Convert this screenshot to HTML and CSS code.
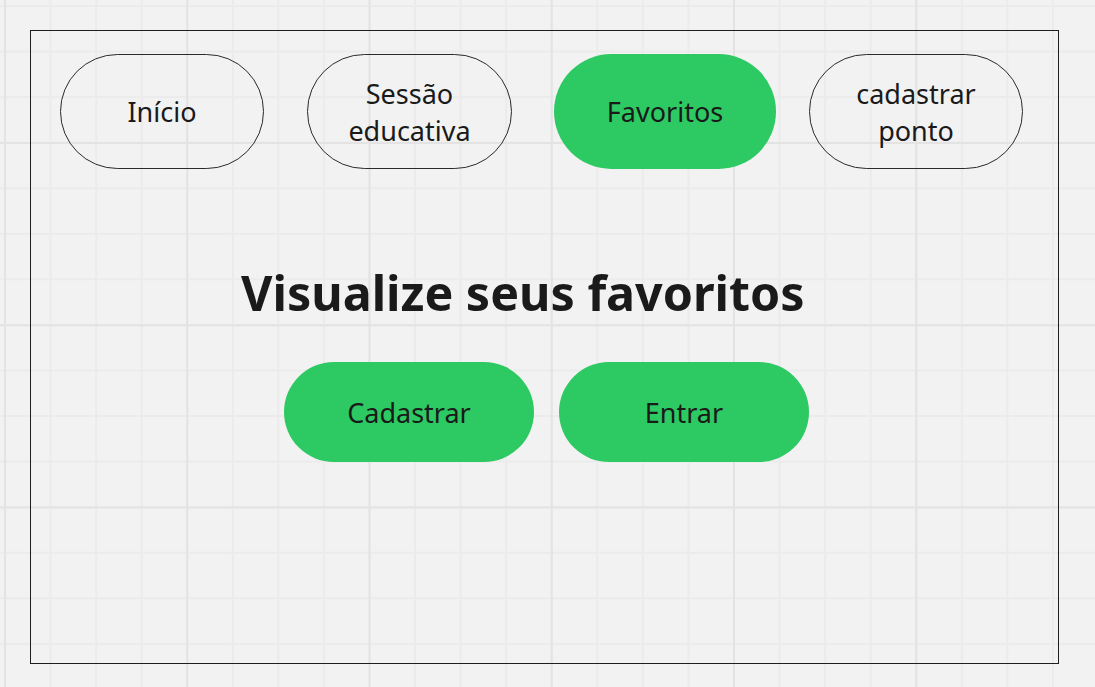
FILE: index.html
```html
<!DOCTYPE html>
<html lang="pt-BR">
<head>
<meta charset="utf-8">
<title>Visualize seus favoritos</title>
<link rel="stylesheet" href="styles.css">
</head>
<body>
<main class="frame">
  <nav class="nav">
    <a class="pill pill-outline pill-inicio">Início</a>
    <a class="pill pill-outline pill-sessao">Sessão<br>educativa</a>
    <a class="pill pill-green pill-favoritos">Favoritos</a>
    <a class="pill pill-outline pill-ponto">cadastrar<br>ponto</a>
  </nav>
  <h1 class="title">Visualize seus favoritos</h1>
  <div class="actions">
    <a class="action">Cadastrar</a>
    <a class="action">Entrar</a>
  </div>
</main>
</body>
</html>
```

FILE: styles.css
```css
html {
  background-color: #f2f2f2;
  background-image:
    linear-gradient(to right, #e3e3e3 2px, transparent 2px),
    linear-gradient(to bottom, #e3e3e3 2px, transparent 2px),
    linear-gradient(to right, #ebebeb 2px, transparent 2px),
    linear-gradient(to bottom, #ebebeb 2px, transparent 2px);
  background-size:
    182.25px 100%,
    100% 182.25px,
    45.5625px 100%,
    100% 45.5625px;
  background-position:
    4px 0,
    0 142px,
    4px 0,
    0 5px;
  min-height: 100%;
}

* {
  box-sizing: border-box;
}

body {
  margin: 0;
  font-family: "Noto Sans", "Open Sans", sans-serif;
  color: #1a1a1a;
}

.frame {
  margin: 30px 0 0 30px;
  width: 1029px;
  height: 634px;
  border: 1px solid #1e1e1e;
  display: flex;
  flex-direction: column;
}

.nav {
  display: flex;
  padding: 23px 0 0 29px;
}

.pill {
  height: 115px;
  border-radius: 58px;
  display: flex;
  align-items: center;
  justify-content: center;
  text-align: center;
  font-size: 27px;
  line-height: 1.36;
  padding-top: 2px;
  color: #1a1a1a;
}

.pill-outline {
  border: 1px solid #2a2a2a;
}

.pill-green {
  background: #2dc962;
}

.pill-inicio {
  width: 204px;
}

.pill-sessao {
  width: 205px;
  margin-left: 43px;
}

.pill-favoritos {
  width: 222px;
  margin-left: 42px;
}

.pill-ponto {
  width: 214px;
  margin-left: 33px;
}

.title {
  margin: 91px 0 0 210px;
  font-size: 48.4px;
  line-height: 64px;
  font-weight: 700;
  color: #1a1a1a;
}

.actions {
  display: flex;
  gap: 25px;
  margin: 38px 0 0 253px;
}

.action {
  width: 250px;
  height: 100px;
  border-radius: 50px;
  background: #2dc962;
  display: flex;
  align-items: center;
  justify-content: center;
  font-size: 27px;
  color: #1a1a1a;
}
```
